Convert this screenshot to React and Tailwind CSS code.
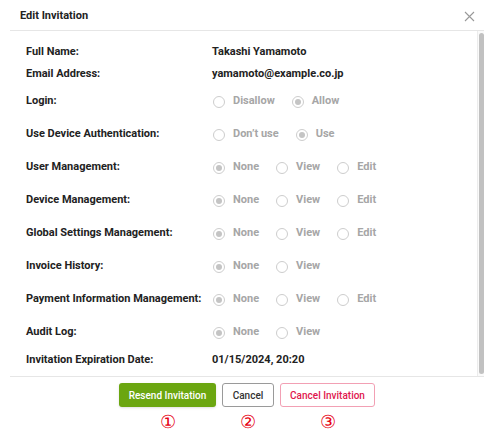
import React from "react";

const rows = [
  { label: "Full Name:", value: "Takashi Yamamoto" },
  { label: "Email Address:", value: "yamamoto@example.co.jp" },
  { label: "Login:", options: ["Disallow", "Allow"], checked: 1 },
  { label: "Use Device Authentication:", options: ["Don’t use", "Use"], checked: 1 },
  { label: "User Management:", options: ["None", "View", "Edit"], checked: 0 },
  { label: "Device Management:", options: ["None", "View", "Edit"], checked: 0 },
  { label: "Global Settings Management:", options: ["None", "View", "Edit"], checked: 0 },
  { label: "Invoice History:", options: ["None", "View"], checked: 0 },
  { label: "Payment Information Management:", options: ["None", "View", "Edit"], checked: 0 },
  { label: "Audit Log:", options: ["None", "View"], checked: 0 },
  { label: "Invitation Expiration Date:", value: "01/15/2024, 20:20" },
];

const Radio = ({ checked, label }) => (
  <div className="flex items-center gap-[8px]">
    <span className="w-[12px] h-[12px] rounded-full border border-[#cdcdcd] flex items-center justify-center">
      {checked && <span className="w-[6px] h-[6px] rounded-full bg-[#c4c4c4]" />}
    </span>
    <span className="text-[#a6a6a6] font-bold">{label}</span>
  </div>
);

export default function App() {
  return (
    <div
      className="w-[494px] h-[442px] bg-white text-[11px] text-[#222]"
      style={{ fontFamily: "Roboto, 'Liberation Sans', sans-serif" }}
    >
      <div className="mx-[10px] h-[411px] flex flex-col">
        <div className="h-[31px] flex items-center justify-between pl-[10px] pr-[10px] pt-[2px] border-b border-[#e6e6e6]">
          <span className="font-bold text-[11px]">Edit Invitation</span>
          <svg width="11" height="11" viewBox="0 0 11 11" className="mr-[-1px]">
            <path d="M1 1L10 10M10 1L1 10" stroke="#999" strokeWidth="1.1" />
          </svg>
        </div>
        <div className="flex h-[346px] border-b border-[#e6e6e6]">
          <div className="flex-1 pt-[10px] pl-[16px]">
            {rows.map((r) => (
              <div
                key={r.label}
                className={`flex items-center ${r.options ? "h-[33px]" : "h-[22px]"}`}
              >
                <div className="w-[186px] font-bold">{r.label}</div>
                {r.options ? (
                  <div className="flex items-center gap-[17px] pl-[1px]">
                    {r.options.map((o, i) => (
                      <Radio key={o} label={o} checked={i === r.checked} />
                    ))}
                  </div>
                ) : (
                  <div className="font-bold">{r.value}</div>
                )}
              </div>
            ))}
          </div>
          <div className="w-[7px] border-l border-[#ececec] bg-[#fafafa] py-[2px] flex justify-center">
            <div className="w-[5px] h-full rounded-full bg-[#c1c1c1]" />
          </div>
        </div>
        <div className="flex justify-center gap-[6px] pt-[6px]">
          <button className="h-[24px] w-[97px] rounded-[3px] bg-[#6ba610] text-white text-[10px] font-medium shadow-sm">
            Resend Invitation
          </button>
          <button className="h-[24px] w-[52px] rounded-[3px] border border-[#9a9a9a] bg-white text-[#333] text-[10px] font-medium">
            Cancel
          </button>
          <button className="h-[24px] w-[95px] rounded-[3px] border border-[#f2a0b4] bg-white text-[#e0164d] text-[10px] font-medium">
            Cancel Invitation
          </button>
        </div>
      </div>
      <div className="flex justify-center gap-[6px] pt-[2px] text-[#e60012] text-[18px] leading-none">
        <div className="w-[97px] text-center">①</div>
        <div className="w-[52px] text-center">②</div>
        <div className="w-[95px] text-center">③</div>
      </div>
    </div>
  );
}
